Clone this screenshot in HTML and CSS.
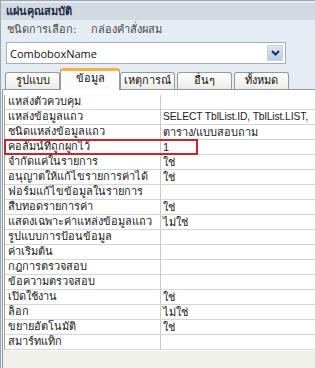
FILE: index.html
```html
<!DOCTYPE html>
<html lang="th">
<head>
    <meta charset="UTF-8">
    <title>แผ่นคุณสมบัติ</title>
    <link rel="stylesheet" href="styles.css">
</head>
<body>
    <div class="sheet">
        <div class="title">แผ่นคุณสมบัติ</div>
        <div class="sel"><span class="sel-label">ชนิดการเลือก:</span><span>กล่องคำสั่งผสม</span></div>
        <div class="combo">
            <span class="combo-text">ComboboxName</span>
            <span class="combo-btn">
                <svg width="9" height="6" viewBox="0 0 9 6"><path d="M1 1 L4.5 4.5 L8 1" fill="none" stroke="#1b2f55" stroke-width="2"/></svg>
            </span>
        </div>
        <div class="tabs">
            <div class="tab">รูปแบบ</div>
            <div class="tab active">ข้อมูล</div>
            <div class="tab">เหตุการณ์</div>
            <div class="tab">อื่นๆ</div>
            <div class="tab">ทั้งหมด</div>
        </div>
        <div class="page">
            <div class="grid">
                <div class="row"><div class="name">แหล่งตัวควบคุม</div><div class="val"></div></div>
                <div class="row"><div class="name">แหล่งข้อมูลแถว</div><div class="val sql">SELECT TblList.ID, TblList.LIST,</div></div>
                <div class="row"><div class="name">ชนิดแหล่งข้อมูลแถว</div><div class="val">ตาราง/แบบสอบถาม</div></div>
                <div class="row marked"><div class="name">คอลัมน์ที่ถูกผูกไว้</div><div class="val">1</div></div>
                <div class="row"><div class="name">จำกัดแค่ในรายการ</div><div class="val">ใช่</div></div>
                <div class="row"><div class="name">อนุญาตให้แก้ไขรายการค่าได้</div><div class="val">ใช่</div></div>
                <div class="row"><div class="name">ฟอร์มแก้ไขข้อมูลในรายการ</div><div class="val"></div></div>
                <div class="row"><div class="name">สืบทอดรายการค่า</div><div class="val">ใช่</div></div>
                <div class="row"><div class="name">แสดงเฉพาะค่าแหล่งข้อมูลแถว</div><div class="val">ไม่ใช่</div></div>
                <div class="row"><div class="name">รูปแบบการป้อนข้อมูล</div><div class="val"></div></div>
                <div class="row"><div class="name">ค่าเริ่มต้น</div><div class="val"></div></div>
                <div class="row"><div class="name">กฎการตรวจสอบ</div><div class="val"></div></div>
                <div class="row"><div class="name">ข้อความตรวจสอบ</div><div class="val"></div></div>
                <div class="row"><div class="name">เปิดใช้งาน</div><div class="val">ใช่</div></div>
                <div class="row"><div class="name">ล็อก</div><div class="val">ไม่ใช่</div></div>
                <div class="row"><div class="name">ขยายอัตโนมัติ</div><div class="val">ใช่</div></div>
                <div class="row"><div class="name">สมาร์ทแท็ก</div><div class="val"></div></div>
            </div>
        </div>
    </div>
</body>
</html>
```

FILE: styles.css
```css
html, body {
    margin: 0;
    padding: 0;
}
body {
    width: 315px;
    height: 368px;
    overflow: hidden;
    background-color: #f0f0ea;
    font-family: Tahoma, "DejaVu Sans", sans-serif;
    font-size: 11px;
    color: #000;
}
.sheet {
    height: 368px;
    border-top: 1px solid #9ba5b2;
    border-left: 1px solid #9ba5b2;
    background-color: #e6ecf4;
    display: flex;
    flex-direction: column;
}
.title {
    height: 17px;
    line-height: 17px;
    margin-top: 2px;
    padding-left: 5px;
    background-color: #d1d9e3;
    color: #1e2c44;
    font-weight: bold;
}
.sel {
    height: 20px;
    line-height: 20px;
    padding-left: 6px;
    color: #4a4a4a;
}
.sel-label {
    margin-right: 14px;
}
.combo {
    box-sizing: border-box;
    width: 280px;
    height: 22px;
    margin: 2px 0 0 5px;
    border: 1px solid #a4aebb;
    background-color: #fff;
    display: flex;
    align-items: center;
    justify-content: space-between;
}
.combo-text {
    padding-left: 3px;
    font-family: "Open Sans", sans-serif;
    font-size: 11px;
    color: #111;
}
.combo-btn {
    box-sizing: border-box;
    width: 16px;
    height: 16px;
    margin-right: 2px;
    background: linear-gradient(#dde7f5, #b9cbe6);
    border: 1px solid #c7d3e4;
    display: flex;
    align-items: center;
    justify-content: center;
}
.tabs {
    display: flex;
    align-items: flex-end;
    height: 22px;
    margin-top: 3px;
    padding-left: 4px;
}
.tab {
    box-sizing: border-box;
    width: 55px;
    height: 17px;
    margin-right: 2px;
    border: 1px solid #919b9c;
    border-bottom: none;
    border-radius: 3px 3px 0 0;
    background: linear-gradient(#ffffff, #ecebe6);
    text-align: center;
    line-height: 16px;
    color: #111;
}
.tab.active {
    width: 60px;
    height: 22px;
    margin: 0 0 -1px -2px;
    border-top: 3px solid #f7b23b;
    background: #fcfcfe;
    line-height: 15px;
    position: relative;
}
.page {
    flex: 1;
    margin-left: 1px;
    border-top: 1px solid #919b9c;
    border-left: 1px solid #919b9c;
    padding: 5px 0 0 1px;
    background: linear-gradient(#fff 261px, #f0f0ea 261px);
}
.grid {
    border-left: 1px solid #a0a0a0;
}
.row {
    display: flex;
    height: 15px;
    box-sizing: border-box;
    border-bottom: 1px solid #d6d6d2;
    background-color: #fff;
    line-height: 14px;
    white-space: nowrap;
}
.name {
    box-sizing: border-box;
    width: 156px;
    flex: none;
    padding-left: 3px;
    border-right: 1px solid #c9c9c5;
    color: #1a1a1a;
    overflow: hidden;
}
.val {
    padding-left: 2px;
    font-family: "Liberation Sans", Tahoma, sans-serif;
    color: #1a1a1a;
    overflow: hidden;
}
.sql {
    font-size: 10.3px;
    letter-spacing: -0.1px;
}
.marked {
    position: relative;
}
.marked::after {
    content: "";
    position: absolute;
    left: -1px;
    top: -1px;
    width: 194px;
    height: 16px;
    box-sizing: border-box;
    border: 2px solid #cf2229;
}
```
